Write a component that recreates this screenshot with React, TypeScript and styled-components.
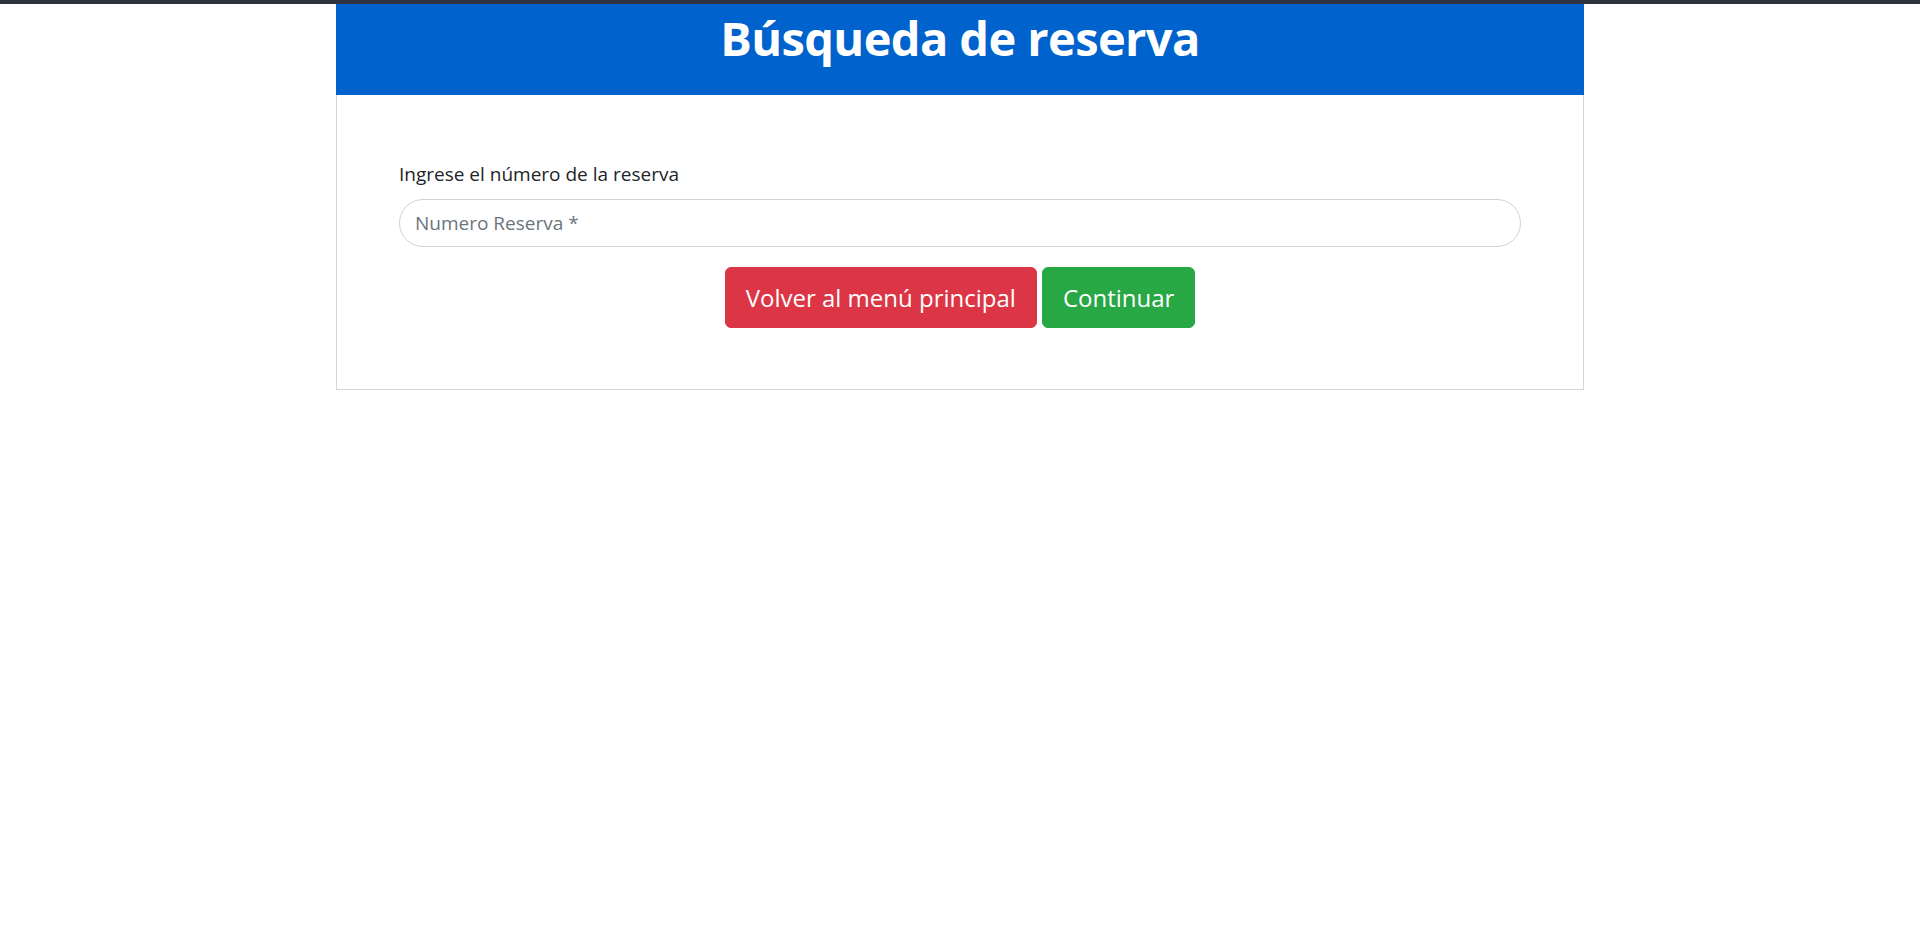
import React from "react";
import styled, { createGlobalStyle } from "styled-components";

const GlobalStyle = createGlobalStyle`
  html, body { margin: 0; padding: 0; background: #ffffff; }
  body { font-family: "Open Sans", "Noto Sans", "Liberation Sans", sans-serif; color: #212529; }
  * { box-sizing: border-box; }
`;

const TopStrip = styled.div`
  height: 4px;
  background: #2e323d;
`;

const Card = styled.section`
  width: 1248px;
  margin: 0 auto;
  border: 1px solid #d5d5d8;
  border-top: none;
  background: #fff;
`;

const Header = styled.header`
  background: #0062cc;
  height: 91px;
  margin: 0 -1px;
  display: flex;
  align-items: center;
  justify-content: center;
`;

const Title = styled.h1`
  margin: 0;
  padding-bottom: 23px;
  color: #fff;
  font-size: 47px;
  font-weight: 700;
  line-height: 1.2;
  letter-spacing: -0.6px;
`;

const Body = styled.div`
  padding: 64px 62px 61px;
  display: flex;
  flex-direction: column;
`;

const Label = styled.label`
  font-size: 19px;
  line-height: 30px;
  color: #212529;
  margin-bottom: 10px;
`;

const Input = styled.input`
  height: 48px;
  width: 100%;
  border: 1px solid #ced4da;
  border-radius: 24px;
  padding: 0 15px;
  font-family: inherit;
  font-size: 19px;
  color: #495057;
  outline: none;
  &::placeholder { color: #6c757d; }
`;

const Actions = styled.div`
  display: flex;
  justify-content: center;
  gap: 5px;
  margin-top: 20px;
`;

const Button = styled.button<{ $variant: "danger" | "success" }>`
  height: 61px;
  padding: 0 20px;
  border: 1px solid ${(p) => (p.$variant === "danger" ? "#dc3545" : "#28a745")};
  background: ${(p) => (p.$variant === "danger" ? "#dc3545" : "#28a745")};
  color: #fff;
  border-radius: 6px;
  font-family: inherit;
  font-size: 24px;
  cursor: pointer;
`;

export default function App() {
  return (
    <>
      <GlobalStyle />
      <TopStrip />
      <Card>
        <Header>
          <Title>Búsqueda de reserva</Title>
        </Header>
        <Body>
          <Label htmlFor="num">Ingrese el número de la reserva</Label>
          <Input id="num" placeholder="Numero Reserva *" />
          <Actions>
            <Button $variant="danger">Volver al menú principal</Button>
            <Button $variant="success">Continuar</Button>
          </Actions>
        </Body>
      </Card>
    </>
  );
}
